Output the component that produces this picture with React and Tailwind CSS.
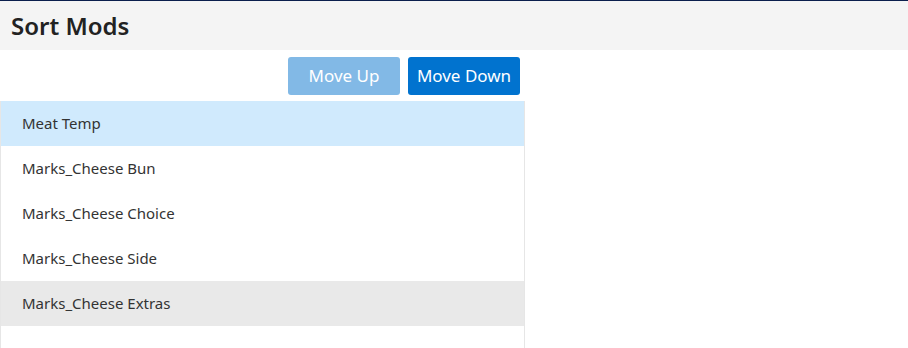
import React, { useState } from "react";

const initialMods = [
  "Meat Temp",
  "Marks_Cheese Bun",
  "Marks_Cheese Choice",
  "Marks_Cheese Side",
  "Marks_Cheese Extras",
];

const App = () => {
  const [mods, setMods] = useState(initialMods);
  const [selected, setSelected] = useState(0);
  const [hovered, setHovered] = useState(4);

  const move = (dir) => {
    const target = selected + dir;
    if (target < 0 || target >= mods.length) return;
    const next = [...mods];
    [next[selected], next[target]] = [next[target], next[selected]];
    setMods(next);
    setSelected(target);
  };

  return (
    <div
      className="w-[908px] h-[348px] overflow-hidden bg-white border-t border-[#0b1f4d]"
      style={{ fontFamily: '"Noto Sans", "Open Sans", sans-serif' }}
    >
      {/* Header */}
      <div className="h-[49px] bg-[#f4f4f4] flex items-center px-[11px]">
        <h1 className="text-[24px] font-semibold text-[#222] leading-none">
          Sort Mods
        </h1>
      </div>

      <div className="w-[525px]">
        {/* Actions */}
        <div className="flex justify-end gap-2 pt-[7px] pb-[6px] pr-[5px]">
          <button
            onClick={() => move(-1)}
            disabled={selected === 0}
            className="w-[112px] h-[38px] rounded-[3px] bg-[#0173cf] text-white text-[17px] disabled:bg-[#82b9e6]"
          >
            Move Up
          </button>
          <button
            onClick={() => move(1)}
            disabled={selected === mods.length - 1}
            className="w-[112px] h-[38px] rounded-[3px] bg-[#0173cf] text-white text-[17px] disabled:bg-[#82b9e6]"
          >
            Move Down
          </button>
        </div>

        {/* List */}
        <ul className="border-l border-r border-[#e6e6e6] min-h-[260px]">
          {mods.map((mod, i) => (
            <li
              key={mod}
              onClick={() => setSelected(i)}
              onMouseEnter={() => setHovered(i)}
              className={
                "h-[45px] flex items-center pl-[21px] text-[15px] text-[#333] cursor-pointer " +
                (i === selected
                  ? "bg-[#d0eafd]"
                  : i === hovered
                  ? "bg-[#e9e9e9]"
                  : "bg-white")
              }
            >
              {mod}
            </li>
          ))}
        </ul>
      </div>
    </div>
  );
};

export default App;
